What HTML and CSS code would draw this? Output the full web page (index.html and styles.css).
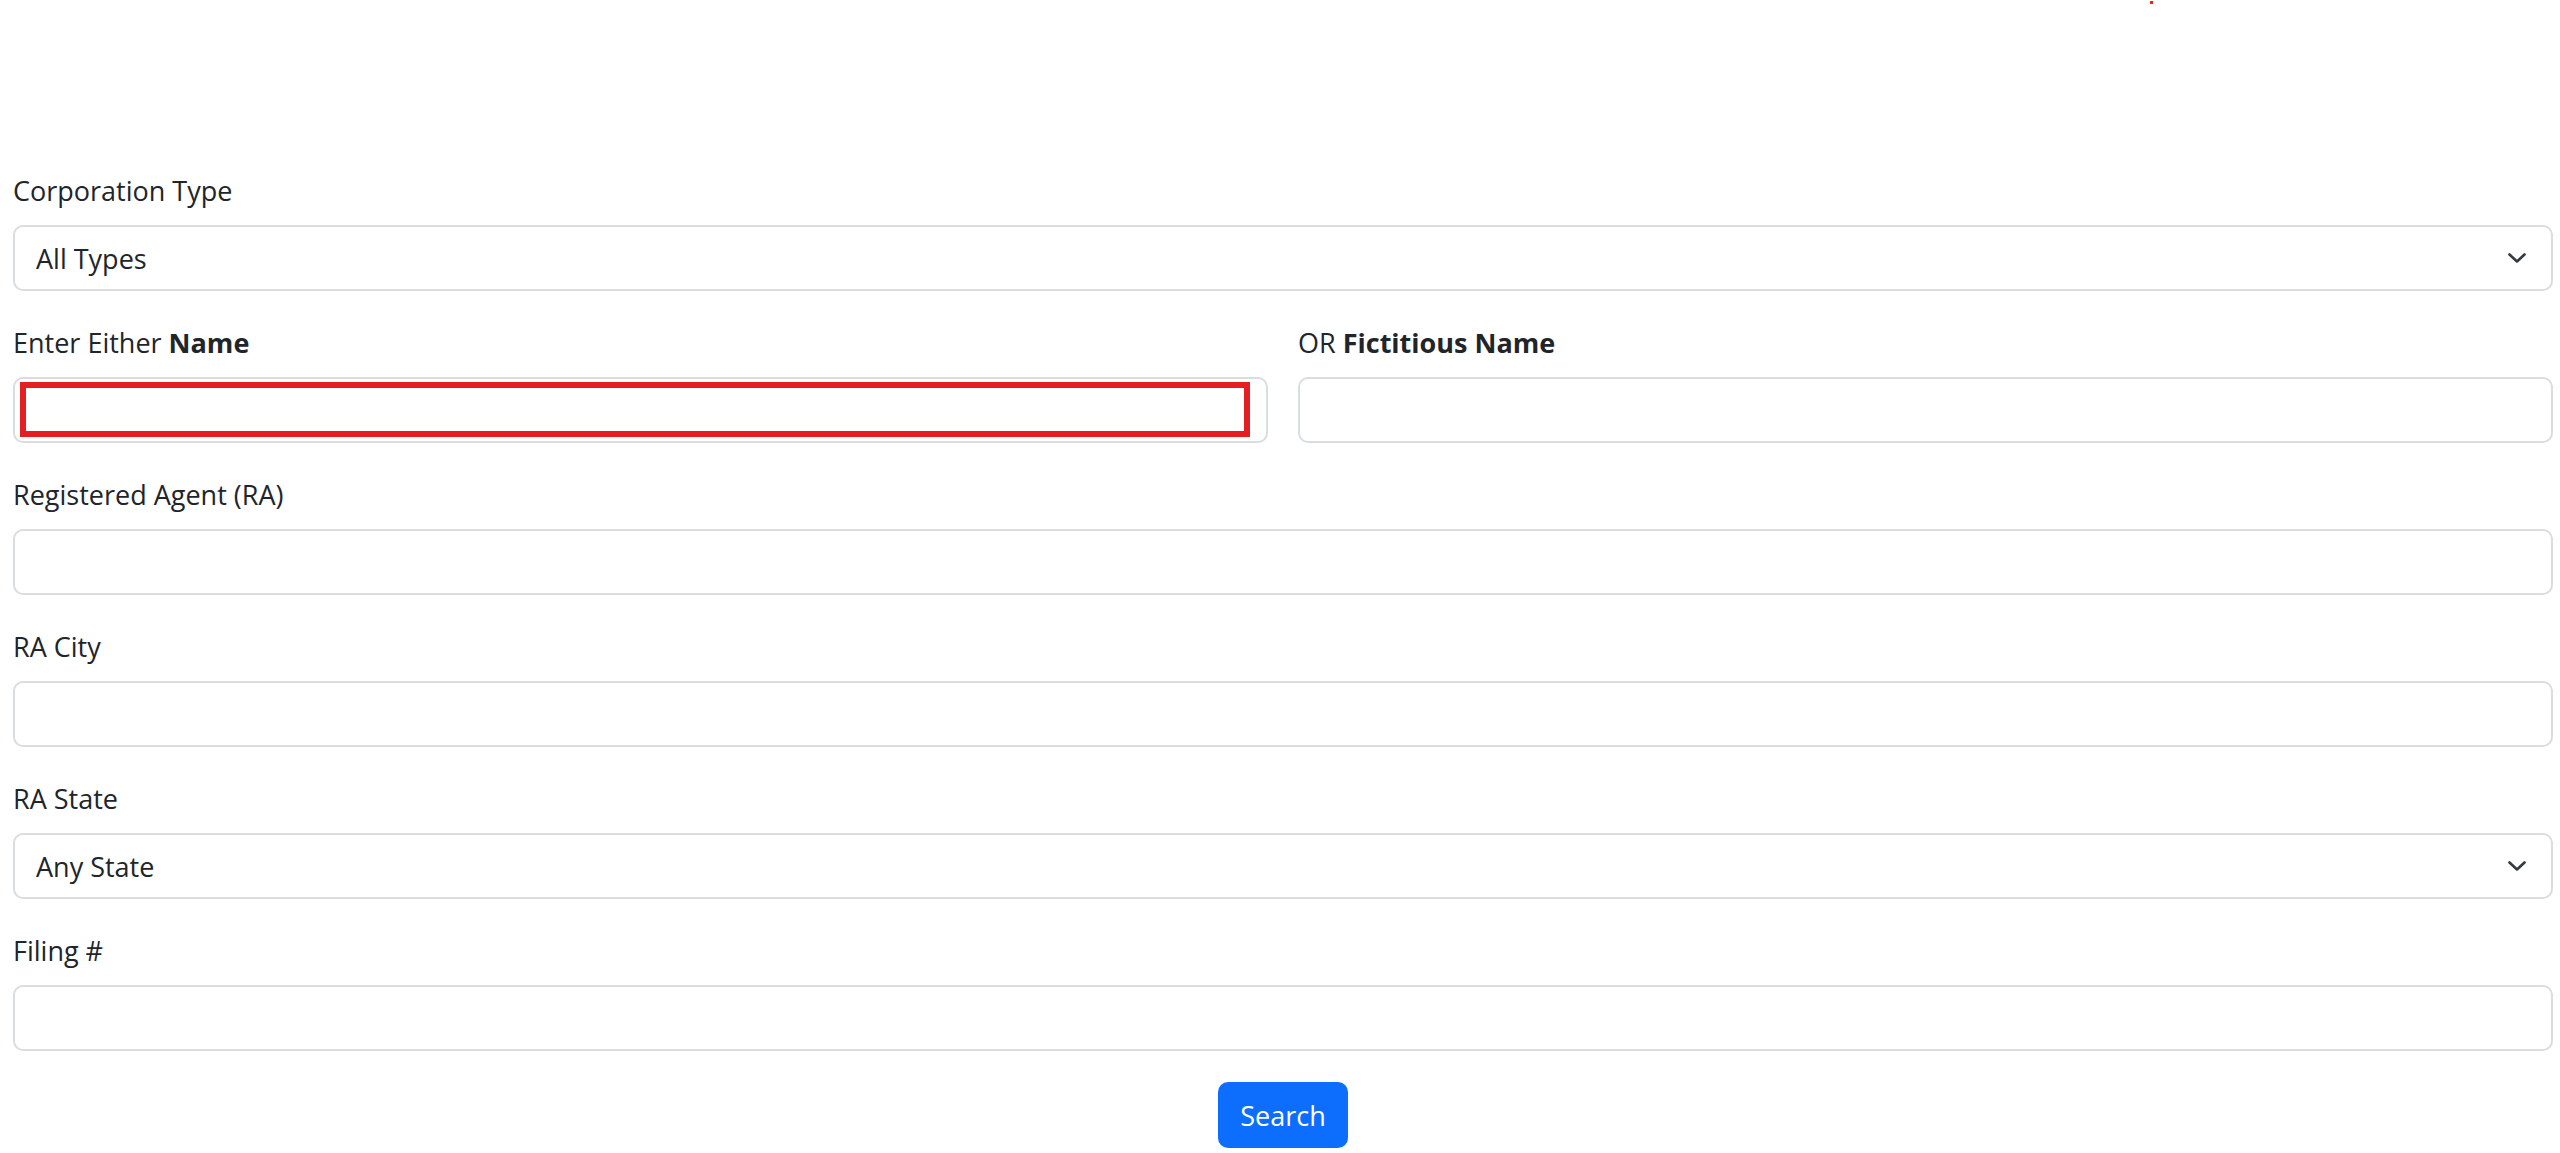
FILE: index.html
```html
<!DOCTYPE html>
<html lang="en">
<head>
<meta charset="utf-8">
<title>Corporation Search</title>
<link rel="stylesheet" href="styles.css">
</head>
<body>
<span class="marker"></span>
<form class="search-form">
  <div class="field">
    <label class="field-label" for="corpType">Corporation Type</label>
    <div class="select-wrap">
      <select id="corpType" class="control select">
        <option>All Types</option>
      </select>
      <svg class="chevron" viewBox="0 0 18 10" width="18" height="10"><path d="M1.5 1.5 L9 8.5 L16.5 1.5" fill="none" stroke="#343a40" stroke-width="2.6" stroke-linecap="round" stroke-linejoin="round"/></svg>
    </div>
  </div>

  <div class="field-row">
    <div class="field">
      <label class="field-label" for="name">Enter Either <b>Name</b></label>
      <div class="input-wrap">
        <input id="name" class="control" type="text">
        <span class="highlight"></span>
      </div>
    </div>
    <div class="field">
      <label class="field-label" for="fictName">OR <b>Fictitious Name</b></label>
      <input id="fictName" class="control" type="text">
    </div>
  </div>

  <div class="field">
    <label class="field-label" for="agent">Registered Agent (RA)</label>
    <input id="agent" class="control" type="text">
  </div>

  <div class="field">
    <label class="field-label" for="raCity">RA City</label>
    <input id="raCity" class="control" type="text">
  </div>

  <div class="field">
    <label class="field-label" for="raState">RA State</label>
    <div class="select-wrap">
      <select id="raState" class="control select">
        <option>Any State</option>
      </select>
      <svg class="chevron" viewBox="0 0 18 10" width="18" height="10"><path d="M1.5 1.5 L9 8.5 L16.5 1.5" fill="none" stroke="#343a40" stroke-width="2.6" stroke-linecap="round" stroke-linejoin="round"/></svg>
    </div>
  </div>

  <div class="field">
    <label class="field-label" for="filing">Filing #</label>
    <input id="filing" class="control" type="text">
  </div>

  <div class="actions">
    <button type="button" class="btn-primary">Search</button>
  </div>
</form>
</body>
</html>
```
FILE: styles.css
```css
html, body {
  margin: 0;
  padding: 0;
  background: #fff;
}

body {
  font-family: "Open Sans", "Noto Sans", sans-serif;
  font-size: 27px;
  color: #212529;
  position: relative;
}

.marker {
  position: absolute;
  left: 2150px;
  top: 1px;
  width: 3px;
  height: 3px;
  background: #ee2222;
}

.search-form {
  padding: 170px 7px 0 13px;
  display: flex;
  flex-direction: column;
}

.field {
  display: flex;
  flex-direction: column;
  margin-bottom: 31px;
  min-width: 0;
}

.field-row {
  display: grid;
  grid-template-columns: 1fr 1fr;
  column-gap: 30px;
}

.field-label {
  display: block;
  height: 42px;
  line-height: 42px;
  margin-bottom: 13px;
}

.field-label b {
  font-weight: 700;
}

.control {
  box-sizing: border-box;
  width: 100%;
  height: 66px;
  border: 2px solid #d9dde2;
  border-radius: 10px;
  background: #fff;
  font-family: inherit;
  font-size: 27px;
  color: #212529;
  padding: 0 21px;
  margin: 0;
  outline: none;
  display: block;
}

.select {
  appearance: none;
  -webkit-appearance: none;
  padding-right: 60px;
}

.select-wrap,
.input-wrap {
  position: relative;
}

.chevron {
  position: absolute;
  right: 27px;
  top: 28px;
  pointer-events: none;
}

.highlight {
  position: absolute;
  left: 7px;
  top: 5px;
  width: 1230px;
  height: 55px;
  box-sizing: border-box;
  border: 6px solid #e41f22;
  pointer-events: none;
}

.actions {
  display: flex;
  justify-content: center;
}

.btn-primary {
  width: 130px;
  height: 66px;
  border: none;
  border-radius: 10px;
  background: #0d6efd;
  color: #fff;
  font-family: inherit;
  font-size: 27px;
  cursor: pointer;
}
```
